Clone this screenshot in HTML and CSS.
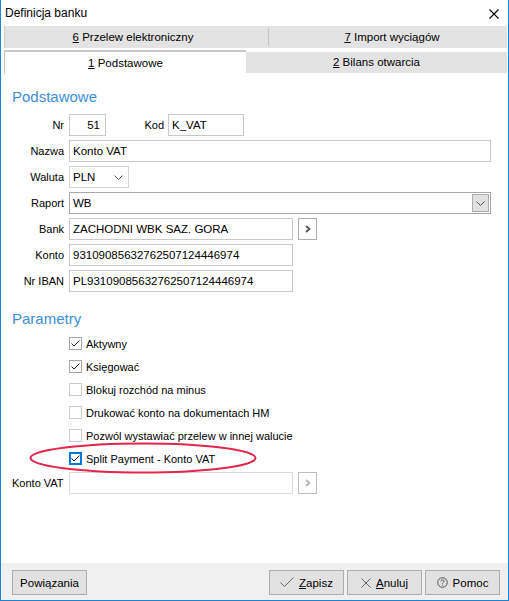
FILE: index.html
```html
<!DOCTYPE html>
<html lang="pl">
<head>
<meta charset="utf-8">
<title>Definicja banku</title>
<link rel="stylesheet" href="styles.css">
</head>
<body>
<div class="window">
  <div class="titlebar">
    <span class="title">Definicja banku</span>
    <svg class="close" width="10" height="10" viewBox="0 0 10 10"><path d="M0.5 0.5 L9.5 9.5 M9.5 0.5 L0.5 9.5" stroke="#000" stroke-width="1.1" fill="none"/></svg>
  </div>

  <div class="tabs">
    <div class="tabrow back">
      <div class="tab t6"><u>6</u> Przelew elektroniczny</div>
      <div class="tabsep"></div>
      <div class="tab t7"><u>7</u> Import wyciągów</div>
    </div>
    <div class="tabrow front">
      <div class="tab active"><u>1</u> Podstawowe</div>
      <div class="tab inactive"><u>2</u> Bilans otwarcia</div>
    </div>
  </div>

  <div class="content">
    <div class="section-title first">Podstawowe</div>

    <div class="row">
      <label class="lbl">Nr</label>
      <div class="field nr">51</div>
      <label class="lbl kod">Kod</label>
      <div class="field kodf">K_VAT</div>
    </div>
    <div class="row">
      <label class="lbl">Nazwa</label>
      <div class="field wide">Konto VAT</div>
    </div>
    <div class="row">
      <label class="lbl">Waluta</label>
      <div class="field waluta"><span>PLN</span>
        <svg class="chev" width="9" height="5" viewBox="0 0 9 5"><path d="M0.5 0.5 L4.5 4.5 L8.5 0.5" stroke="#555" fill="none"/></svg>
      </div>
    </div>
    <div class="row">
      <label class="lbl">Raport</label>
      <div class="field wide raport"><span>WB</span>
        <div class="ddbtn"><svg width="9" height="5" viewBox="0 0 9 5"><path d="M0.5 0.5 L4.5 4.5 L8.5 0.5" stroke="#555" fill="none"/></svg></div>
      </div>
    </div>
    <div class="row">
      <label class="lbl">Bank</label>
      <div class="field mid">ZACHODNI WBK SAZ. GORA</div>
      <div class="pick"><svg width="6" height="8" viewBox="0 0 6 8"><path d="M1 1 L4.5 4 L1 7" stroke="#555" stroke-width="1.8" fill="none"/></svg></div>
    </div>
    <div class="row">
      <label class="lbl">Konto</label>
      <div class="field mid">93109085632762507124446974</div>
    </div>
    <div class="row">
      <label class="lbl">Nr IBAN</label>
      <div class="field mid">PL93109085632762507124446974</div>
    </div>

    <div class="section-title second">Parametry</div>

    <div class="checks">
      <div class="check"><span class="box on"><svg width="11" height="11" viewBox="0 0 11 11"><path d="M1.5 5.5 L4 8 L9.5 2.5" stroke="#222" fill="none"/></svg></span><span>Aktywny</span></div>
      <div class="check"><span class="box on"><svg width="11" height="11" viewBox="0 0 11 11"><path d="M1.5 5.5 L4 8 L9.5 2.5" stroke="#222" fill="none"/></svg></span><span>Księgować</span></div>
      <div class="check"><span class="box"></span><span>Blokuj rozchód na minus</span></div>
      <div class="check"><span class="box"></span><span>Drukować konto na dokumentach HM</span></div>
      <div class="check"><span class="box"></span><span>Pozwól wystawiać przelew w innej walucie</span></div>
      <div class="check"><span class="box focus"><svg width="9" height="9" viewBox="0 0 9 9"><path d="M0.5 4.5 L3 7 L8.5 1.5" stroke="#111" fill="none"/></svg></span><span>Split Payment - Konto VAT</span></div>
    </div>

    <div class="row vat">
      <label class="lbl left">Konto VAT</label>
      <div class="field mid disabled"></div>
      <div class="pick disabled"><svg width="6" height="8" viewBox="0 0 6 8"><path d="M1 1 L4.5 4 L1 7" stroke="#b4b4b4" stroke-width="1.8" fill="none"/></svg></div>
    </div>
  </div>

  <div class="footer">
    <button class="btn">Powiązania</button>
    <div class="spacer"></div>
    <button class="btn"><svg width="14" height="11" viewBox="0 0 14 11"><path d="M0.5 5.5 L4.5 9.5 L13.5 0.5" stroke="#666" fill="none"/></svg><span><u>Z</u>apisz</span></button>
    <button class="btn"><svg width="10" height="10" viewBox="0 0 10 10"><path d="M0.5 0.5 L9.5 9.5 M9.5 0.5 L0.5 9.5" stroke="#666" fill="none"/></svg><span><u>A</u>nuluj</span></button>
    <button class="btn"><svg width="11" height="11" viewBox="0 0 11 11"><circle cx="5.5" cy="5.5" r="4.8" stroke="#555" fill="none"/><path d="M3.9 4.3 C3.9 2.4 7.1 2.4 7.1 4.2 C7.1 5.3 5.5 5.3 5.5 6.6" stroke="#555" fill="none"/><circle cx="5.5" cy="8.1" r="0.6" fill="#555"/></svg><span>Pomoc</span></button>
  </div>

  <svg class="mark" width="232" height="34" viewBox="0 0 232 34"><ellipse cx="115" cy="17" rx="112.5" ry="14.5" stroke="#e2264c" stroke-width="2" fill="none"/></svg>
</div>
</body>
</html>
```

FILE: styles.css
```css
html, body {
  margin: 0;
  padding: 0;
  background: #ffffff;
}

.window {
  position: relative;
  width: 509px;
  height: 601px;
  box-sizing: border-box;
  border-left: 1px solid #1883d7;
  border-right: 1px solid #1883d7;
  border-bottom: 1px solid #1883d7;
  background: #ffffff;
  display: flex;
  flex-direction: column;
  font-family: "Liberation Sans", Arial, sans-serif;
  font-size: 11px;
  color: #000;
}

.titlebar {
  height: 26px;
  display: flex;
  align-items: center;
  justify-content: space-between;
  padding: 0 9px 0 4px;
  flex: none;
}

.title {
  font-size: 12px;
}

.close {
  display: block;
  margin-top: 1px;
}

.tabs {
  margin: 0 1px 0 3px;
  flex: none;
  font-size: 11.5px;
}

.tabrow {
  display: flex;
}

.tabrow.back {
  height: 22px;
  background: #e3e3e3;
  border-left: 1px solid #c8c8c8;
  align-items: center;
}

.tabrow.back .tab {
  text-align: center;
}

.t6 {
  width: 256px;
}

.t7 {
  flex: 1;
  padding-left: 8px;
}

.tabsep {
  width: 1px;
  height: 18px;
  background: #c4c4c4;
  margin-left: 7px;
}

.tabrow.front {
  margin-top: 2px;
  height: 24px;
}

.tab.active {
  width: 242px;
  border-top: 2px solid #c8c8c8;
  border-left: 1px solid #c8c8c8;
  background: #fff;
  text-align: center;
  padding-top: 5px;
  box-sizing: border-box;
  height: 24px;
}

.tab.inactive {
  flex: 1;
  margin-top: 2px;
  height: 21px;
  background: #e3e3e3;
  text-align: center;
  line-height: 21px;
}

u {
  text-decoration: underline;
  text-underline-offset: 1px;
}

.content {
  flex: 1;
  background: #fff;
  display: flex;
  flex-direction: column;
}

.section-title {
  font-size: 15px;
  line-height: 18px;
  color: #3d8fd8;
  padding-left: 11px;
}

.section-title.first {
  margin-top: 14px;
  margin-bottom: 8px;
}

.section-title.second {
  margin-top: 14px;
  margin-bottom: 4px;
}

.row {
  display: flex;
  align-items: center;
  height: 22px;
  margin-bottom: 4px;
}

.lbl {
  width: 64px;
  text-align: right;
  flex: none;
  box-sizing: border-box;
  padding-right: 1px;
}

.lbl.kod {
  width: 62px;
  padding-right: 4px;
  margin-left: 0;
}

.lbl.left {
  text-align: left;
  padding-left: 11px;
}

.field {
  margin-left: 4px;
  height: 22px;
  box-sizing: border-box;
  border: 1px solid #c9c9c9;
  padding: 0 4px 0 3px;
  display: flex;
  align-items: center;
  white-space: nowrap;
  font-size: 11.5px;
}

.lbl.kod + .field {
  margin-left: 0;
}

.field.nr {
  width: 37px;
  justify-content: flex-end;
  padding-right: 5px;
}

.field.kodf {
  width: 76px;
}

.field.wide {
  width: 422px;
}

.field.waluta {
  width: 60px;
  border-color: #d6d6d6;
  justify-content: space-between;
  padding-right: 5px;
}

.chev {
  display: block;
  margin-top: 1px;
}

.field.raport {
  border-color: #a8a8a8;
  justify-content: space-between;
  padding-right: 1px;
}

.ddbtn {
  width: 17px;
  height: 18px;
  box-sizing: border-box;
  background: #e1e1e1;
  border: 1px solid #adadad;
  display: flex;
  align-items: center;
  justify-content: center;
}

.field.mid {
  width: 224px;
}

.field.disabled {
  border-color: #dadada;
}

.pick {
  margin-left: 5px;
  width: 19px;
  height: 22px;
  box-sizing: border-box;
  border: 1px solid #adadad;
  background: #fff;
  display: flex;
  align-items: center;
  justify-content: center;
}

.pick.disabled {
  border-color: #bdbdbd;
}

.checks {
  display: flex;
  flex-direction: column;
  padding-left: 68px;
}

.check {
  height: 23px;
  display: flex;
  align-items: center;
  gap: 4px;
  white-space: nowrap;
}

.box {
  width: 13px;
  height: 13px;
  box-sizing: border-box;
  border: 1px solid #cccccc;
  background: #fff;
  display: flex;
  align-items: center;
  justify-content: center;
  flex: none;
}

.box.on {
  border-color: #a6a6a6;
}

.box.focus {
  border: 2px solid #0078d7;
}

.box svg {
  display: block;
}

.row.vat {
  margin-top: 2px;
}

.footer {
  height: 37px;
  flex: none;
  background: #f0f0f0;
  display: flex;
  align-items: flex-start;
  padding: 7px 8px 0 11px;
  box-sizing: border-box;
  gap: 3px;
}

.spacer {
  flex: 1;
}

.btn {
  width: 75px;
  height: 25px;
  box-sizing: border-box;
  border: 1px solid #adadad;
  background: #e1e1e1;
  font-family: "Liberation Sans", Arial, sans-serif;
  font-size: 11.5px;
  color: #000;
  padding: 0;
  display: flex;
  align-items: center;
  justify-content: center;
  gap: 5px;
}

.btn svg {
  display: block;
}

.mark {
  position: absolute;
  left: 27px;
  top: 441px;
}
```
